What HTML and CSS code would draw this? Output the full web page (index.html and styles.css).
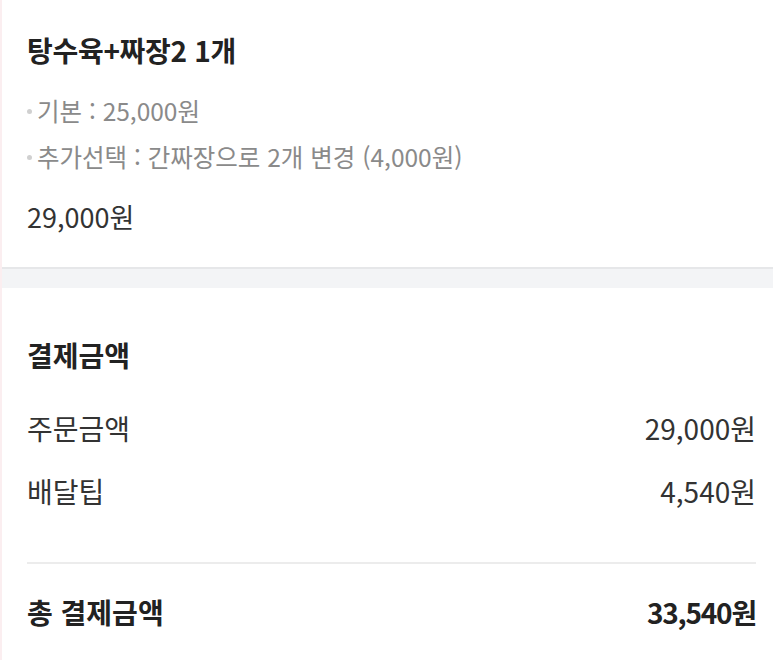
FILE: index.html
```html
<!DOCTYPE html>
<html lang="ko">
<head>
<meta charset="utf-8">
<link rel="stylesheet" href="styles.css">
</head>
<body>
<main class="page">
  <section class="menu">
    <h2 class="menu-title">탕수육+짜장2 1개</h2>
    <ul class="options">
      <li>기본 : 25,000원</li>
      <li>추가선택 : 간짜장으로 2개 변경 (4,000원)</li>
    </ul>
    <p class="menu-price">29,000원</p>
  </section>
  <div class="gap"></div>
  <section class="payment">
    <h2 class="pay-title">결제금액</h2>
    <div class="row first"><span>주문금액</span><span>29,000원</span></div>
    <div class="row"><span>배달팁</span><span>4,540원</span></div>
    <hr class="divider">
    <div class="row total"><span>총 결제금액</span><span>33,540원</span></div>
  </section>
</main>
</body>
</html>
```
FILE: styles.css
```css
* { box-sizing: border-box; }
html, body { margin: 0; padding: 0; background: #fff; }
body {
  font-family: "Noto Sans CJK KR", "Noto Sans", sans-serif;
  color: #333;
}
.page {
  border-left: 2px solid #fbeef0;
  min-height: 660px;
}
.menu { padding: 32px 17px 32px 25px; }
.menu-title {
  margin: 0;
  font-size: 28px;
  line-height: 36px;
  font-weight: 700;
  color: #222;
  letter-spacing: -0.3px;
}
.options {
  list-style: none;
  margin: 20px 0 0;
  padding: 0;
}
.options li {
  position: relative;
  padding-left: 10px;
  font-size: 24.5px;
  line-height: 46px;
  color: #8a8a8a;
}
.options li::before {
  content: "";
  position: absolute;
  left: 0;
  top: 21px;
  width: 5px;
  height: 5px;
  border-radius: 50%;
  background: #d0d0d0;
}
.menu-price {
  margin: 19px 0 0;
  font-size: 27px;
  line-height: 36px;
  color: #333;
}
.gap {
  height: 21px;
  border-top: 2px solid #e6e7e9;
  background: #f3f4f6;
}
.payment { padding: 49px 17px 40px 25px; }
.pay-title {
  margin: 0;
  font-size: 28px;
  line-height: 36px;
  font-weight: 700;
  color: #222;
}
.row {
  display: flex;
  justify-content: space-between;
  font-size: 28px;
  line-height: 40px;
  margin-top: 23px;
  color: #333;
}
.row.first { margin-top: 35px; }
.divider {
  margin: 51px 0 0;
  border: 0;
  height: 2px;
  background: #ececec;
}
.row.total {
  margin-top: 28px;
  font-size: 28px;
  font-weight: 700;
  color: #222;
}
.row.total span:last-child { letter-spacing: -1.2px; }
```
